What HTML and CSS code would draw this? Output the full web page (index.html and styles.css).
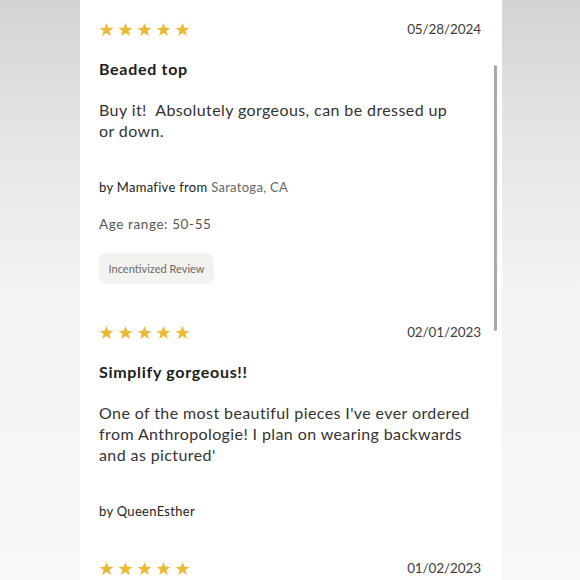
FILE: index.html
```html
<!DOCTYPE html>
<html lang="en">
<head>
<meta charset="utf-8">
<title>Reviews</title>
<link rel="stylesheet" href="styles.css">
</head>
<body>
<div class="stage">
  <div class="panel">
    <div class="scrollbar"></div>

    <article class="review">
      <div class="head">
        <div class="stars">
          <svg viewBox="0 0 24 24"><polygon points="12,1.5 15,9.2 23,9.4 16.7,14.4 19,22.3 12,17.6 5,22.3 7.3,14.4 1,9.4 9,9.2"/></svg>
          <svg viewBox="0 0 24 24"><polygon points="12,1.5 15,9.2 23,9.4 16.7,14.4 19,22.3 12,17.6 5,22.3 7.3,14.4 1,9.4 9,9.2"/></svg>
          <svg viewBox="0 0 24 24"><polygon points="12,1.5 15,9.2 23,9.4 16.7,14.4 19,22.3 12,17.6 5,22.3 7.3,14.4 1,9.4 9,9.2"/></svg>
          <svg viewBox="0 0 24 24"><polygon points="12,1.5 15,9.2 23,9.4 16.7,14.4 19,22.3 12,17.6 5,22.3 7.3,14.4 1,9.4 9,9.2"/></svg>
          <svg viewBox="0 0 24 24"><polygon points="12,1.5 15,9.2 23,9.4 16.7,14.4 19,22.3 12,17.6 5,22.3 7.3,14.4 1,9.4 9,9.2"/></svg>
        </div>
        <span class="date">05/28/2024</span>
      </div>
      <h3 class="title">Beaded top</h3>
      <p class="body">Buy it!&nbsp; Absolutely gorgeous, can be dressed up<br>or down.</p>
      <p class="author">by Mamafive from <span class="loc">Saratoga, CA</span></p>
      <p class="age">Age range: 50-55</p>
      <span class="badge">Incentivized Review</span>
    </article>

    <article class="review">
      <div class="head">
        <div class="stars">
          <svg viewBox="0 0 24 24"><polygon points="12,1.5 15,9.2 23,9.4 16.7,14.4 19,22.3 12,17.6 5,22.3 7.3,14.4 1,9.4 9,9.2"/></svg>
          <svg viewBox="0 0 24 24"><polygon points="12,1.5 15,9.2 23,9.4 16.7,14.4 19,22.3 12,17.6 5,22.3 7.3,14.4 1,9.4 9,9.2"/></svg>
          <svg viewBox="0 0 24 24"><polygon points="12,1.5 15,9.2 23,9.4 16.7,14.4 19,22.3 12,17.6 5,22.3 7.3,14.4 1,9.4 9,9.2"/></svg>
          <svg viewBox="0 0 24 24"><polygon points="12,1.5 15,9.2 23,9.4 16.7,14.4 19,22.3 12,17.6 5,22.3 7.3,14.4 1,9.4 9,9.2"/></svg>
          <svg viewBox="0 0 24 24"><polygon points="12,1.5 15,9.2 23,9.4 16.7,14.4 19,22.3 12,17.6 5,22.3 7.3,14.4 1,9.4 9,9.2"/></svg>
        </div>
        <span class="date">02/01/2023</span>
      </div>
      <h3 class="title">Simplify gorgeous!!</h3>
      <p class="body">One of the most beautiful pieces I've ever ordered from Anthropologie! I plan on wearing backwards and as pictured'</p>
      <p class="author">by QueenEsther</p>
    </article>

    <article class="review">
      <div class="head">
        <div class="stars">
          <svg viewBox="0 0 24 24"><polygon points="12,1.5 15,9.2 23,9.4 16.7,14.4 19,22.3 12,17.6 5,22.3 7.3,14.4 1,9.4 9,9.2"/></svg>
          <svg viewBox="0 0 24 24"><polygon points="12,1.5 15,9.2 23,9.4 16.7,14.4 19,22.3 12,17.6 5,22.3 7.3,14.4 1,9.4 9,9.2"/></svg>
          <svg viewBox="0 0 24 24"><polygon points="12,1.5 15,9.2 23,9.4 16.7,14.4 19,22.3 12,17.6 5,22.3 7.3,14.4 1,9.4 9,9.2"/></svg>
          <svg viewBox="0 0 24 24"><polygon points="12,1.5 15,9.2 23,9.4 16.7,14.4 19,22.3 12,17.6 5,22.3 7.3,14.4 1,9.4 9,9.2"/></svg>
          <svg viewBox="0 0 24 24"><polygon points="12,1.5 15,9.2 23,9.4 16.7,14.4 19,22.3 12,17.6 5,22.3 7.3,14.4 1,9.4 9,9.2"/></svg>
        </div>
        <span class="date">01/02/2023</span>
      </div>
    </article>
  </div>
</div>
</body>
</html>
```

FILE: styles.css
```css
html, body {
  margin: 0;
  padding: 0;
  width: 580px;
  height: 580px;
  overflow: hidden;
}

body {
  background: linear-gradient(to bottom, #d3d3d3 0%, #e6e6e6 25%, #f3f3f3 50%, #f8f8f8 100%);
  font-family: Lato, "Open Sans", sans-serif;
  color: #333;
}

.stage {
  display: flex;
  justify-content: flex-start;
  height: 580px;
  padding-left: 80px;
}

.panel {
  position: relative;
  width: 422px;
  height: 580px;
  background: #fff;
  box-sizing: border-box;
  padding: 20px 21px 0 19px;
  overflow: hidden;
}

.scrollbar {
  position: absolute;
  left: 414px;
  top: 65px;
  width: 3px;
  height: 266px;
  border-radius: 2px;
  background: #a9a9a9;
}

.review {
  display: flex;
  flex-direction: column;
  align-items: flex-start;
  margin-bottom: 39px;
}

.head {
  display: flex;
  justify-content: space-between;
  align-items: center;
  width: 100%;
  height: 18px;
}

.stars {
  display: flex;
  gap: 4px;
}

.stars svg {
  width: 15px;
  height: 15px;
  fill: #ebb935;
}

.date {
  font-size: 13.5px;
  letter-spacing: -0.1px;
  color: #3d3d3d;
}

.title {
  margin: 21px 0 0;
  font-size: 16px;
  line-height: 20px;
  font-weight: 700;
  letter-spacing: 0.7px;
  color: #1c1c1c;
}

.body {
  margin: 20px 0 0;
  font-size: 16px;
  line-height: 21px;
  letter-spacing: 0.4px;
  color: #333;
  width: 382px;
}

.author {
  margin: 37px 0 0;
  font-size: 13px;
  line-height: 18px;
  color: #222;
  letter-spacing: 0.3px;
}

.loc {
  color: #666;
}

.age {
  margin: 19px 0 0;
  font-size: 13.5px;
  line-height: 18px;
  letter-spacing: 0.6px;
  color: #555;
}

.badge {
  margin-top: 20px;
  display: inline-flex;
  align-items: center;
  height: 31px;
  padding: 0 9px;
  box-sizing: border-box;
  width: 115px;
  justify-content: center;
  border-radius: 8px;
  background: #f4f2ef;
  font-size: 11px;
  color: #6a6a6a;
}
```
